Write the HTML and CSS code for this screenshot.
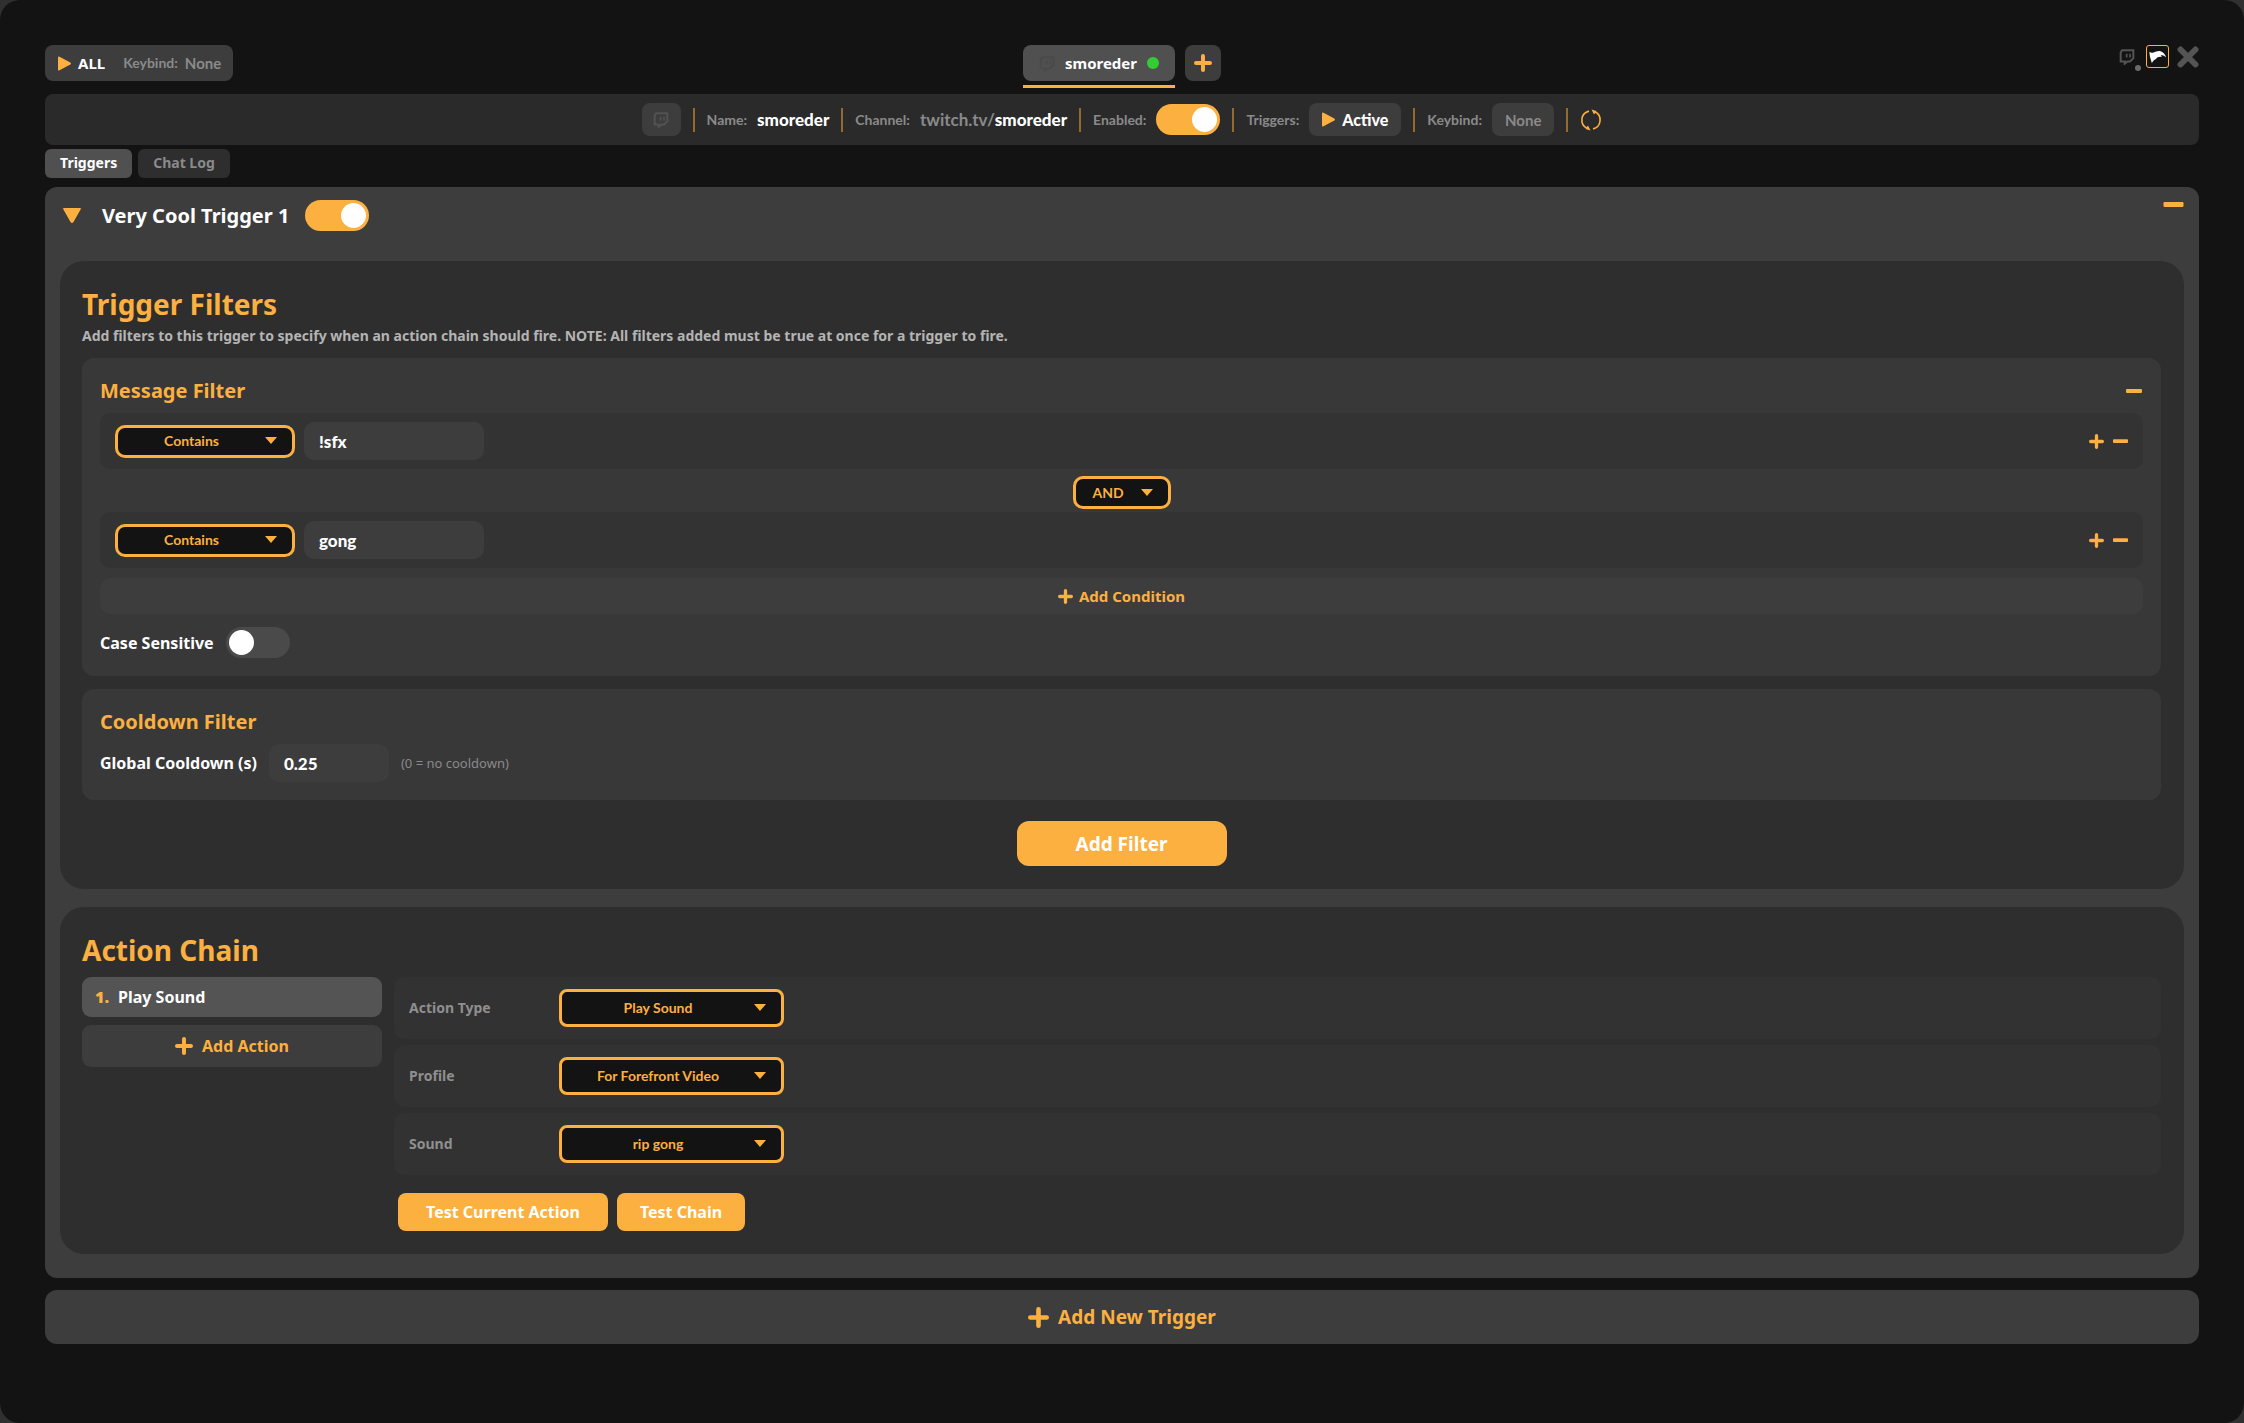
FILE: index.html
```html
<!DOCTYPE html>
<html lang="en">
<head>
<meta charset="utf-8">
<meta name="viewport" content="width=device-width, initial-scale=1">
<title>Chat Triggers</title>
<link rel="stylesheet" href="styles.css">
</head>
<body>
<svg class="defs" aria-hidden="true">
  <symbol id="play" viewBox="0 0 13 15"><path d="M1.500.8Q0 0 0 1.600V13.400Q0 15 1.500 14.200L12.300 8.400Q13.600 7.500 12.300 6.600Z" fill="currentColor"/></symbol>
  <symbol id="plus" viewBox="0 0 20 20"><path d="M10 2.200V17.800M2.200 10H17.800" fill="none" stroke="currentColor" stroke-width="4.400" stroke-linecap="round"/></symbol>
  <symbol id="minus" viewBox="0 0 20 5"><rect width="20" height="5" rx="1.200" fill="currentColor"/></symbol>
  <symbol id="twitch" viewBox="0 0 24 24"><path d="M4.500 2.500H21.500V14.500L16.500 19.500H12.500L8.500 23V19.500H2.500V6Z" fill="none" stroke="currentColor" stroke-width="3"/><path d="M11.500 8V13.500M16.500 8V13.500" stroke="currentColor" stroke-width="2.500"/></symbol>
</svg>

<header class="top">
  <div class="all-pill">
    <button class="all-btn" type="button"><svg class="icon-play"><use href="#play"/></svg>ALL</button>
    <span class="label">Keybind:</span>
    <button class="keybind-btn" type="button">None</button>
  </div>
  <nav class="accounts">
    <div class="account">
      <button class="account-tab" type="button"><svg class="icon-twitch"><use href="#twitch"/></svg><span>smoreder</span><i class="status"></i></button>
    </div>
    <button class="account-add" type="button" aria-label="Add account"><svg class="icon-18"><use href="#plus"/></svg></button>
  </nav>
  <div class="window-icons">
    <button class="win-twitch" type="button" aria-label="Twitch status"><svg class="icon-twitch"><use href="#twitch"/></svg><i class="win-dot"></i></button>
    <button class="win-bird" type="button" aria-label="Home"><svg viewBox="1 1 21 21"><path d="M3.300 6.800Q5.500 8.500 7.500 7.500Q10 5.800 14 6Q19 7.500 20 12.500Q17.500 9.500 14.500 10.500Q15.500 11 16 12Q12 11 9.800 14Q7.500 14.800 5.800 18Q3.500 12 3.300 6.800Z" fill="#fff"/></svg></button>
    <button class="win-close" type="button" aria-label="Close"><svg viewBox="0 0 22 22"><path d="M3.500 3.500L18.500 18.500M18.500 3.500L3.500 18.500" stroke="currentColor" stroke-width="6" stroke-linecap="round"/></svg></button>
  </div>
</header>

<section class="bar" aria-label="Account settings">
  <button class="chip chip-icon" type="button" aria-label="Platform"><svg class="icon-twitch"><use href="#twitch"/></svg></button>
  <i class="sep"></i>
  <div class="field"><span class="label">Name:</span><strong>smoreder</strong></div>
  <i class="sep"></i>
  <div class="field"><span class="label">Channel:</span><span class="channel">twitch.tv/<strong>smoreder</strong></span></div>
  <i class="sep"></i>
  <div class="field"><label class="label" for="enabled">Enabled:</label><input class="toggle" id="enabled" type="checkbox" checked></div>
  <i class="sep"></i>
  <div class="field"><span class="label">Triggers:</span><button class="chip chip-active" type="button"><svg class="icon-play"><use href="#play"/></svg>Active</button></div>
  <i class="sep"></i>
  <div class="field"><span class="label">Keybind:</span><button class="chip" type="button">None</button></div>
  <i class="sep"></i>
  <button class="refresh" type="button" aria-label="Reconnect"><svg viewBox="0 0 22 22"><path d="M9 2.100A9.200 9.200 0 0 0 7 19.300M13 19.900A9.200 9.200 0 0 0 15 2.700" fill="none" stroke="currentColor" stroke-width="1.600"/><path d="M11.500 0.500L16.500 2L14 5.500ZM10.500 21.500L5.500 20L8 16.500Z" fill="currentColor"/></svg></button>
</section>

<nav class="tabs">
  <button class="tab tab-on" type="button">Triggers</button>
  <button class="tab" type="button">Chat Log</button>
</nav>

<main class="trigger">
  <div class="trigger-head">
    <button class="collapse" type="button" aria-label="Collapse"><svg viewBox="0 0 18 15"><path d="M1 0H17Q18.500 0 17.600 1.500L10.500 14Q9 16 7.500 14L.4 1.500Q-.5 0 1 0Z" fill="currentColor"/></svg></button>
    <h1>Very Cool Trigger 1</h1>
    <input class="toggle" type="checkbox" checked aria-label="Trigger enabled">
    <button class="remove" type="button" aria-label="Remove trigger"><svg class="minus-21"><use href="#minus"/></svg></button>
  </div>

  <section class="panel">
    <h2>Trigger Filters</h2>
    <p class="hint-line">Add filters to this trigger to specify when an action chain should fire. NOTE: All filters added must be true at once for a trigger to fire.</p>

    <div class="card">
      <div class="card-head"><h3>Message Filter</h3><button class="remove" type="button" aria-label="Remove filter"><svg class="minus-18"><use href="#minus"/></svg></button></div>
      <div class="cond">
        <span class="pick pick-cond"><select aria-label="Condition 1"><option>Contains</option></select></span>
        <input class="text text-cond" type="text" value="!sfx" aria-label="Value 1">
        <div class="cond-tools"><button type="button" aria-label="Add"><svg class="icon-15"><use href="#plus"/></svg></button><button type="button" aria-label="Remove"><svg class="minus-15"><use href="#minus"/></svg></button></div>
      </div>
      <div class="joiner"><span class="pick pick-join"><select aria-label="Join"><option>AND</option></select></span></div>
      <div class="cond">
        <span class="pick pick-cond"><select aria-label="Condition 2"><option>Contains</option></select></span>
        <input class="text text-cond" type="text" value="gong" aria-label="Value 2">
        <div class="cond-tools"><button type="button" aria-label="Add"><svg class="icon-15"><use href="#plus"/></svg></button><button type="button" aria-label="Remove"><svg class="minus-15"><use href="#minus"/></svg></button></div>
      </div>
      <button class="add-cond" type="button"><svg class="icon-15"><use href="#plus"/></svg>Add Condition</button>
      <div class="option"><label for="case">Case Sensitive</label><input class="toggle" id="case" type="checkbox"></div>
    </div>

    <div class="card">
      <div class="card-head"><h3>Cooldown Filter</h3></div>
      <div class="option"><label for="cooldown">Global Cooldown (s)</label><input class="text text-num" id="cooldown" type="text" value="0.25"><span class="note">(0 = no cooldown)</span></div>
    </div>
    <button class="primary add-filter" type="button">Add Filter</button>
  </section>

  <section class="panel">
    <h2>Action Chain</h2>
    <div class="chain">
      <div class="actions">
        <button class="action" type="button"><b>1.</b>Play Sound</button>
        <button class="add-action" type="button"><svg class="icon-18"><use href="#plus"/></svg>Add Action</button>
      </div>
      <div class="props">
        <div class="prop"><label for="type">Action Type</label><span class="pick pick-prop"><select id="type"><option>Play Sound</option></select></span></div>
        <div class="prop"><label for="profile">Profile</label><span class="pick pick-prop"><select id="profile"><option>For Forefront Video</option></select></span></div>
        <div class="prop"><label for="sound">Sound</label><span class="pick pick-prop"><select id="sound"><option>rip gong</option></select></span></div>
        <div class="tests"><button class="primary test-action" type="button">Test Current Action</button><button class="primary test-chain" type="button">Test Chain</button></div>
      </div>
    </div>
  </section>
</main>

<button class="add-trigger" type="button"><svg class="icon-21"><use href="#plus"/></svg>Add New Trigger</button>
</body>
</html>
```
FILE: styles.css
```css
:root {
  --orange: #fcb040;
  --gray: #8a8a8a;
  --ui: "Noto Sans", "Open Sans", sans-serif;
  --round: Lato, "Open Sans", sans-serif;
}

* { box-sizing: border-box; }

html { background: #303030; }

body {
  margin: 0;
  min-height: 100vh;
  padding: 45px;
  border-radius: 20px;
  background: #131313;
  color: #fff;
  font: 700 16px/24px var(--ui);
}

h1, h2, h3, p { margin: 0; }
svg { display: block; flex: none; }
.defs { position: absolute; width: 0; height: 0; }

button {
  display: flex;
  align-items: center;
  justify-content: center;
  padding: 0;
  border: 0;
  background: none;
  color: inherit;
  font: inherit;
  white-space: nowrap;
}

.icon-play { width: 13px; height: 15px; color: var(--orange); }
.icon-twitch { width: 16px; height: 17px; }
.icon-15 { width: 15px; height: 15px; }
.icon-18 { width: 18px; height: 18px; }
.icon-21 { width: 21px; height: 21px; }
.minus-15 { width: 15px; height: 4px; }
.minus-18 { width: 18px; height: 4px; }
.minus-21 { width: 21px; height: 5px; }

.label { color: var(--gray); font: 700 14px/20px var(--round); }

/* Top row */
.top {
  display: grid;
  grid-template-columns: 1fr auto 1fr;
  align-items: start;
  margin-bottom: 6px;
}

.all-pill {
  display: flex;
  align-items: center;
  justify-self: start;
  height: 36px;
  padding: 0 12px 0 13px;
  border-radius: 8px;
  background: #3d3d3d;
}
.all-btn { gap: 7px; margin-right: 18px; font-size: 15px; }
.keybind-btn { margin-left: 7px; color: var(--gray); font: 700 15px/20px var(--round); }

.accounts { display: flex; gap: 10px; align-items: start; }
.account { padding-bottom: 4px; border-bottom: 3px solid var(--orange); }
.account-tab {
  gap: 10px;
  width: 152px;
  height: 36px;
  border-radius: 8px;
  background: #505050;
  font-size: 15px;
}
.account-tab .icon-twitch { color: #4a4a4a; }
.status { width: 12px; height: 12px; border-radius: 50%; background: #32cd32; }
.account-add { width: 36px; height: 36px; border-radius: 8px; background: #3d3d3d; color: var(--orange); }

.window-icons { display: flex; justify-self: end; gap: 8px; color: #545454; }
.win-twitch { position: relative; width: 19px; height: 23px; justify-content: start; }
.win-dot { position: absolute; right: -3px; bottom: -3px; width: 6px; height: 6px; border-radius: 50%; background: #6a6a6a; }
.win-bird { width: 23px; height: 23px; border: 1px solid var(--orange); border-radius: 3px; }
.win-bird svg { width: 21px; height: 21px; }
.win-close svg { width: 22px; height: 22px; }

/* Account bar */
.bar {
  display: flex;
  align-items: center;
  justify-content: center;
  gap: 12px;
  height: 51px;
  margin-bottom: 4px;
  border-radius: 8px;
  background: #2a2a2a;
}
.field { display: flex; align-items: center; gap: 10px; }
.field strong { color: #fff; font: 900 17px/24px var(--round); }
.channel { color: var(--gray); font: 700 17px/24px var(--round); }
.sep { width: 2px; height: 24px; background: #936b31; }
.chip {
  height: 33px;
  padding: 0 13px;
  border-radius: 8px;
  background: #3d3d3d;
  color: var(--gray);
  font: 700 15px/20px var(--round);
}
.chip-icon { width: 39px; color: #525252; }
.chip-active { gap: 7px; color: #fff; font-size: 16px; font-weight: 900; }
.refresh { color: var(--orange); }
.refresh svg { width: 22px; height: 22px; }

.toggle {
  appearance: none;
  flex: none;
  width: 64px;
  height: 31px;
  margin: 0;
  padding: 3px;
  border-radius: 16px;
  background: #4a4a4a;
}
.toggle::before {
  content: "";
  display: block;
  width: 25px;
  height: 25px;
  border-radius: 50%;
  background: #fff;
}
.toggle:checked { background: var(--orange); }
.toggle:checked::before { margin-left: auto; }

/* View tabs */
.tabs { display: flex; gap: 6px; margin-bottom: 9px; }
.tab {
  height: 29px;
  padding: 0 15px 2px;
  border-radius: 6px;
  background: #2e2e2e;
  color: var(--gray);
  font-size: 14px;
}
.tab-on { background: #505050; color: #fff; }

/* Trigger */
.trigger {
  margin-bottom: 12px;
  padding: 13px 15px 24px;
  border-radius: 12px;
  background: #3d3d3d;
}
.trigger-head { display: flex; align-items: center; height: 31px; margin-bottom: 30px; }
.collapse { margin: 0 21px 0 3px; color: var(--orange); }
.collapse svg { width: 18px; height: 15px; }
h1 { margin-right: 16px; font-size: 20px; line-height: 30px; }
.remove { align-self: start; margin: 2px 0 0 auto; color: var(--orange); }

.panel {
  padding: 23px 23px 23px 22px;
  border-radius: 24px;
  background: #2e2e2e;
}
.panel + .panel { margin-top: 18px; }
h2 { color: var(--orange); font-size: 28px; line-height: 40px; }
.hint-line { margin-bottom: 10px; color: #b4b4b4; font-size: 14px; }

.card {
  padding: 18px;
  border-radius: 12px;
  background: #383838;
}
.card + .card { margin-top: 13px; }
.card-head { display: flex; margin-bottom: 7px; }
.card-head .remove { align-self: center; margin-top: 0; }
h3 { color: var(--orange); font-size: 20px; line-height: 30px; }

.cond {
  display: flex;
  align-items: center;
  gap: 9px;
  height: 56px;
  padding: 0 15px;
  border-radius: 10px;
  background: #333;
}
.cond-tools { display: flex; gap: 9px; margin-left: auto; color: var(--orange); }
.joiner { display: flex; justify-content: center; padding: 7px 0 3px; }

.pick { position: relative; display: block; }
.pick::after {
  content: "";
  position: absolute;
  top: 50%;
  right: 18px;
  border: 6px solid transparent;
  border-top: 7px solid var(--orange);
  border-bottom: 0;
  margin-top: -4px;
  pointer-events: none;
}
.pick select {
  appearance: none;
  display: block;
  width: 100%;
  height: 33px;
  padding: 0 27px 0 0;
  border: 3px solid var(--orange);
  border-radius: 10px;
  background: #131313;
  color: var(--orange);
  font: 700 14px/20px var(--round);
  text-align: center;
  text-align-last: center;
}
.pick-cond { width: 180px; }
.pick-join { width: 98px; }
.pick-prop { width: 225px; }
.pick-prop select { height: 38px; border-radius: 8px; }

.text {
  height: 38px;
  padding: 0 15px;
  border: 0;
  border-radius: 10px;
  background: #3d3d3d;
  color: #fff;
  font: 900 17px/24px var(--round);
}
.text-cond { width: 180px; }
.text-num { width: 120px; }

.add-cond {
  gap: 6px;
  width: 100%;
  height: 36px;
  margin: 10px 0 13px;
  border-radius: 10px;
  background: #3d3d3d;
  color: var(--orange);
  font-size: 15px;
}
.option { display: flex; align-items: center; gap: 12px; }
.note { color: var(--gray); font-size: 13px; font-weight: 400; }

.primary {
  height: 38px;
  border-radius: 8px;
  background: var(--orange);
}
.add-filter { width: 210px; height: 45px; margin: 21px auto 0; border-radius: 12px; font-size: 19px; }

/* Action chain */
.chain { display: flex; gap: 12px; margin-top: 7px; }
.actions { flex: none; width: 300px; }
.action, .add-action { width: 100%; border-radius: 9px; }
.action { justify-content: start; gap: 9px; height: 40px; margin-bottom: 8px; padding: 0 13px; background: #545454; }
.action b { color: var(--orange); }
.add-action { gap: 9px; height: 42px; background: #3d3d3d; color: var(--orange); }
.props { flex: 1; display: grid; gap: 6px; }
.prop {
  display: flex;
  align-items: center;
  height: 62px;
  padding: 0 15px;
  border-radius: 10px;
  background: #323232;
}
.prop label { width: 150px; color: #8f8f8f; font-size: 14px; }
.tests { display: flex; gap: 9px; margin-top: 12px; padding-left: 4px; }
.test-action { width: 210px; }
.test-chain { width: 128px; }

.add-trigger {
  gap: 9px;
  width: 100%;
  height: 54px;
  border-radius: 12px;
  background: #3d3d3d;
  color: var(--orange);
  font-size: 19px;
}
```
